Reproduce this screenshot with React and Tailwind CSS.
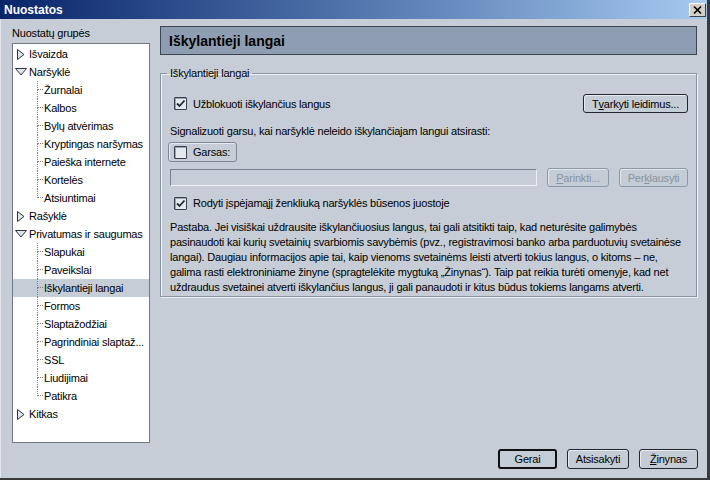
import clsx from "clsx";

const tree = [
  { label: "Išvaizda" },
  {
    label: "Naršyklė",
    children: ["Žurnalai", "Kalbos", "Bylų atvėrimas", "Kryptingas naršymas", "Paieška internete", "Kortelės", "Atsiuntimai"]
  },
  { label: "Rašyklė" },
  {
    label: "Privatumas ir saugumas",
    children: [
      "Slapukai",
      "Paveikslai",
      "Iškylantieji langai",
      "Formos",
      "Slaptažodžiai",
      "Pagrindiniai slaptaž...",
      "SSL",
      "Liudijimai",
      "Patikra"
    ]
  },
  { label: "Kitkas" }
];

const selected = "Iškylantieji langai";

const paragraph = [
  "Pastaba. Jei visiškai uždrausite iškylančiuosius langus, tai gali atsitikti taip, kad neturėsite galimybės",
  "pasinaudoti kai kurių svetainių svarbiomis savybėmis (pvz., registravimosi banko arba parduotuvių svetainėse",
  "langai). Daugiau informacijos apie tai, kaip vienoms svetainėms leisti atverti tokius langus, o kitoms – ne,",
  "galima rasti elektroniniame žinyne (spragtelėkite mygtuką „Žinynas“). Taip pat reikia turėti omenyje, kad net",
  "uždraudus svetainei atverti iškylančius langus, ji gali panaudoti ir kitus būdus tokiems langams atverti."
];

const Arrow = ({ open }) =>
  open ? (
    <svg width="12" height="8" viewBox="0 0 12 8">
      <path d="M0.5 0.5 L11.5 0.5 L6 7 Z" fill="#dfe4ea" stroke="#2e343b" />
    </svg>
  ) : (
    <svg width="8" height="11" viewBox="0 0 8 11">
      <path d="M0.5 0.5 L7 5.5 L0.5 10.5 Z" fill="#dfe4ea" stroke="#2e343b" />
    </svg>
  );

const Checkbox = ({ checked }) => (
  <div className="flex h-[13px] w-[13px] shrink-0 items-center justify-center rounded-[1px] border border-[#39424c] bg-[#e4e9ee] shadow-[inset_1px_1px_0_#9aa4b0]">
    {checked ? (
      <svg width="11" height="11" viewBox="0 0 11 11">
        <path d="M2 5.5 L4.5 8 L9.5 2.5" fill="none" stroke="#1f2a36" strokeWidth="1.8" />
      </svg>
    ) : null}
  </div>
);

const Btn = ({ children, className, disabled, primary }) => (
  <div
    className={clsx(
      "flex items-center justify-center rounded-[3px] bg-[#c4ccd6] whitespace-nowrap",
      primary ? "border-2 border-[#111]" : "border",
      disabled
        ? "border-[#8e99a6] text-[#8893a0] shadow-[inset_1px_1px_0_#e2e6eb]"
        : !primary && "border-[#22272e] shadow-[inset_1px_1px_0_#e6eaee]",
      className
    )}
  >
    {children}
  </div>
);

const ChildRow = ({ label, last }) => (
  <div className={clsx("flex h-[18px] items-center", label === selected && "bg-[#c5cdd6]")}>
    <div className="w-[24px] shrink-0" />
    <div className="flex h-full w-[6px] shrink-0 flex-col">
      <div className="h-[9px] border-b border-l border-dotted border-[#7c7c7c]" />
      <div className={clsx("flex-1", !last && "border-l border-dotted border-[#7c7c7c]")} />
    </div>
    <span className="pl-px whitespace-nowrap">{label}</span>
  </div>
);

export default function App() {
  return (
    <div className="flex h-[480px] w-[710px] flex-col border-r-[3px] border-b-2 border-[#3a3a3a] bg-[#c6cdd6] font-['Liberation_Sans',Arial,sans-serif] text-[11px] leading-[14px] tracking-[-0.2px] text-black">
      {/* title bar */}
      <div className="flex h-[19px] shrink-0 items-center justify-between bg-linear-to-r from-[#0a246a] to-[#a6caf0] pr-[1px] pl-[4px]">
        <span className="text-[12px] font-bold tracking-normal text-white">Nuostatos</span>
        <div className="flex h-[14px] w-[17px] items-center justify-center border-t border-l border-b border-r border-t-white border-l-white border-b-[#404040] border-r-[#404040] bg-[#d4d0c8]">
          <svg width="9" height="8" viewBox="0 0 9 8">
            <path d="M1 0.5 L8 7.5 M8 0.5 L1 7.5" stroke="#000" strokeWidth="1.6" />
          </svg>
        </div>
      </div>

      <div className="flex flex-1 flex-col border-l border-[#e2e6eb]">
        <div className="flex pt-[7px] pl-[11px]">
          {/* left column */}
          <div className="w-[138px] shrink-0">
            <p className="mb-[3px] h-[14px]">Nuostatų grupės</p>
            <div className="h-[400px] border border-[#6f7885] bg-white pt-px">
              {tree.map((group) => (
                <div key={group.label}>
                  <div className="flex h-[18px] items-center">
                    <div className={clsx("flex w-[16px] shrink-0", group.children ? "pl-[2px]" : "pl-[4px]")}>
                      <Arrow open={!!group.children} />
                    </div>
                    <span className="whitespace-nowrap">{group.label}</span>
                  </div>
                  {group.children?.map((child, i) => (
                    <ChildRow key={child} label={child} last={i === group.children.length - 1} />
                  ))}
                </div>
              ))}
            </div>
          </div>

          {/* right column */}
          <div className="ml-[10px] w-[537px] shrink-0">
            <div className="flex h-[29px] items-center border border-[#3c4552] bg-[#8e9db1] pl-[8px] text-[14px] font-bold tracking-normal">
              Iškylantieji langai
            </div>

            <fieldset className="mt-[11px] border border-[#8a95a2] pt-[14px] pr-[8px] pb-px pl-[9px] shadow-[inset_1px_1px_0_#eef1f4,1px_1px_0_#eef1f4]">
              <legend className="-ml-[3px] px-[3px]">Iškylantieji langai</legend>

              <div className="flex h-[19px] items-center justify-between">
                <div className="ml-[4px] flex items-center gap-[6px]">
                  <Checkbox checked />
                  <span>Užblokuoti iškylančius langus</span>
                </div>
                <Btn className="h-[19px] w-[105px]">
                  T<u>v</u>arkyti leidimus...
                </Btn>
              </div>

              <p className="mt-[11px]">Signalizuoti garsu, kai naršyklė neleido iškylančiajam langui atsirasti:</p>

              <div className="mt-[4px] -ml-[2px] flex h-[20px] w-[69px] items-center gap-[6px] rounded-[3px] border border-[#7d8896] pl-[5px] shadow-[inset_1px_1px_0_#e6eaee]">
                <Checkbox />
                <span>Garsas:</span>
              </div>

              <div className="mt-[6px] flex h-[19px] items-center gap-[10px]">
                <div className="h-[17px] w-[367px] border border-t-[#77818d] border-l-[#77818d] border-r-[#eef1f4] border-b-[#eef1f4] bg-[#c6cdd6]" />
                <Btn disabled className="h-[19px] w-[62px]">
                  <u>P</u>arinkti...
                </Btn>
                <Btn disabled className="h-[19px] w-[69px]">
                  Per<u>k</u>lausyti
                </Btn>
              </div>

              <div className="mt-[9px] ml-[4px] flex h-[14px] items-center gap-[6px]">
                <Checkbox checked />
                <span>Rodyti įspėjamąjį ženkliuką naršyklės būsenos juostoje</span>
              </div>

              <div className="mt-[10px] leading-[15px]">
                {paragraph.map((line) => (
                  <p key={line} className="whitespace-nowrap">
                    {line}
                  </p>
                ))}
              </div>
            </fieldset>
          </div>
        </div>

        {/* footer buttons */}
        <div className="mt-[6px] flex justify-end gap-[10px] pr-[9px]">
          <Btn primary className="h-[20px] w-[59px]">
            Gerai
          </Btn>
          <Btn className="h-[20px] w-[62px]">Atsisakyti</Btn>
          <Btn className="h-[20px] w-[59px]">
            <u>Ž</u>inynas
          </Btn>
        </div>
      </div>
    </div>
  );
}
